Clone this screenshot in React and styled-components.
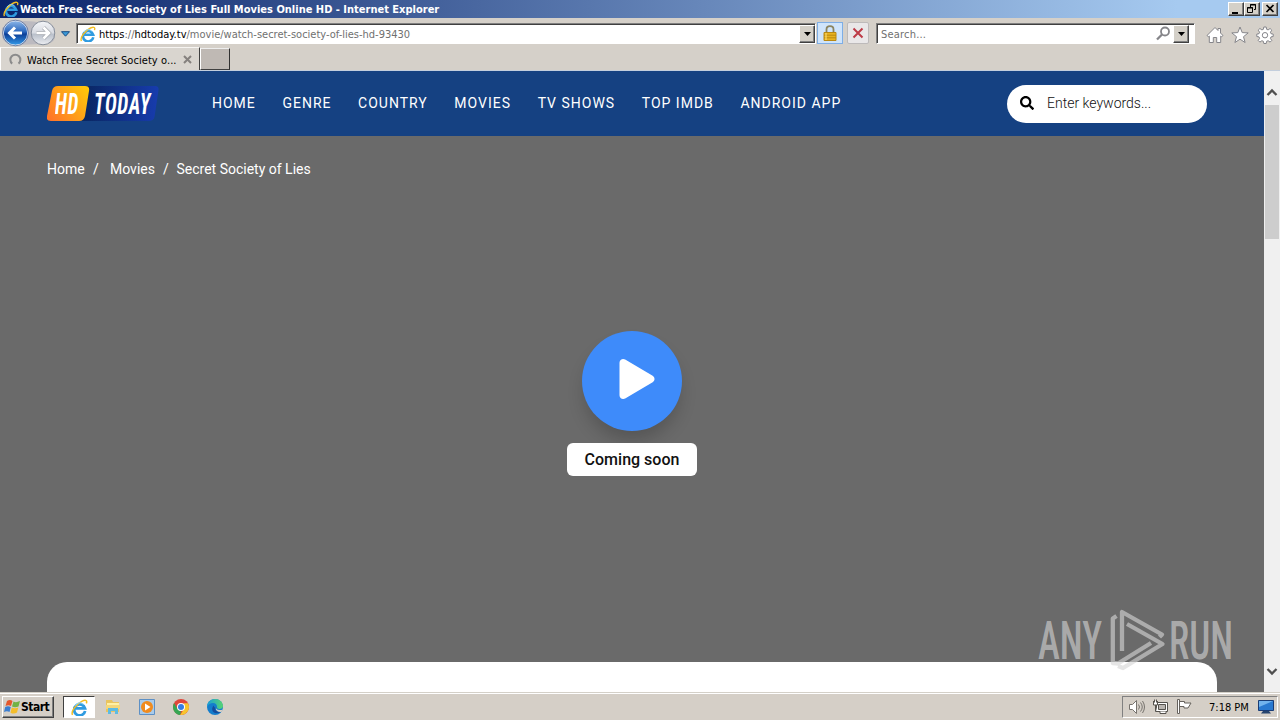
import React from 'react';
import styled, { createGlobalStyle } from 'styled-components';
import { FaSearch, FaPlay } from 'react-icons/fa';

const Global = createGlobalStyle`
  * { box-sizing: border-box; }
  body { margin: 0; overflow: hidden; background: #d4d0c8; }
`;
const Screen = styled.div`
  width: 1280px; height: 720px; display: flex; flex-direction: column; overflow: hidden;
  font: 11px 'DejaVu Sans Condensed', 'DejaVu Sans', sans-serif; font-stretch: condensed; color: #000;
`;
const Label = styled.span`
  display: block; white-space: pre; letter-spacing: ${p => p.$ls || 0}px;
`;
const TitleBar = styled.div`
  height: 18px; flex: none; display: flex; align-items: center; padding: 0 2px 0 3px;
  background: linear-gradient(90deg, #0a246a 0%, #a6caf0 92%); color: #fff; font-weight: bold;
`;
const TitleText = styled(Label)`flex: 1; margin-left: 1px;`;
const WinButton = styled.div`
  width: 16px; height: 14px; margin-left: ${p => p.$gap || 0}px; background: #d4d0c8;
  border: 1px solid; border-color: #fff #404040 #404040 #fff; box-shadow: inset -1px -1px #808080;
  svg { display: block; }
`;
const AddressBar = styled.div`
  height: 29px; flex: none; display: flex; align-items: flex-start; padding-top: 5px; background: #d5d0c9;
`;
const NavButtons = styled.div`width: 76px; height: 29px; margin-top: -5px; svg { display: block; }`;
const Field = styled.div`
  height: 21px; width: ${p => p.$w}px; display: flex; align-items: center; background: #fff;
  border: 1px solid; border-color: #808080 #fff #fff #808080; box-shadow: inset 1px 1px #404040;
  padding-left: ${p => p.$pad}px; margin-right: ${p => p.$mr || 0}px; color: #707070;
  b { color: #000; font-weight: normal; }
`;
const FieldText = styled(Label)`flex: 1; margin: 1px 0 0 ${p => p.$ml || 0}px;`;
const DropButton = styled.div`
  width: 16px; height: 18px; background: #d4d0c8; margin: 0 ${p => p.$mr || 0}px 0 2px;
  border: 1px solid; border-color: #fff #404040 #404040 #fff; box-shadow: inset -1px -1px #808080;
  display: flex; align-items: center; justify-content: center;
`;
const ToolButton = styled.div`
  width: ${p => p.$w}px; height: 22px; margin: -1px ${p => p.$mr}px 0 0; display: flex; align-items: center; justify-content: center;
  background: ${p => p.$active ? '#cfe4fb' : '#e9e7e8'}; border: 1px solid ${p => p.$active ? '#7eaee6' : '#bdbaba'};
  border-radius: ${p => p.$active ? 0 : 2}px;
`;
const Tools = styled.div`display: flex; gap: 7px; margin: 3px 0 0 11px;`;
const TabStrip = styled.div`
  height: 24px; flex: none; display: flex; background: #d5d0c9; border-bottom: 1px solid #c3cedd;
`;
const Tab = styled.div`
  width: 200px; height: 23px; display: flex; align-items: center; padding: 1px 7px 0 8px;
  border-top: 1px solid #f7f5f2; border-left: 1px solid #fff; border-right: 1px solid #404040; background: #d9d5cf;
`;
const TabText = styled(Label)`flex: 1; margin: 1px 0 0 5px;`;
const NewTab = styled.div`
  width: 30px; height: 22px; margin-top: 1px; background: #bfb9b4;
  border: 1px solid; border-color: #eee #303030 #404040 #fff;
`;
const Viewport = styled.div`
  height: 621px; flex: none; display: flex; font-family: Roboto, sans-serif; font-stretch: normal;
`;
const Page = styled.main`
  width: 1264px; height: 621px; background: #6a6a6a; display: flex; flex-direction: column; overflow: hidden; position: relative;
`;
const SiteHeader = styled.header`
  height: 65px; flex: none; background: #154182; display: flex; align-items: center; padding: 0 57px 0 47px;
`;
const LogoBox = styled.div`
  width: 112px; height: 36px; display: flex; position: relative; color: #fff;
`;
const LogoArt = styled.svg`position: absolute; inset: 0;`;
const LogoWord = styled.span`
  position: absolute; left: ${p => p.$x}px; top: 0; font: italic 700 29px/36px Roboto, sans-serif; font-stretch: condensed;
  transform: scaleX(${p => p.$s}); transform-origin: left; white-space: pre; letter-spacing: 1px;
`;
const Menu = styled.nav`
  flex: 1; display: flex; gap: 26.6px; margin: -2px 0 0 53px; font-size: 14px; line-height: 20px; letter-spacing: 1px; color: #fff;
`;
const SearchBox = styled.div`
  width: 200px; height: 38px; border-radius: 19px; background: #fff; display: flex; align-items: center;
  padding: 0 0 2px 13px; gap: 13px; font-size: 14px; font-weight: 300; color: #111;
`;
const Crumbs = styled.div`
  display: flex; padding: 23px 0 0 47px; height: 43px; font-size: 14px; line-height: 20px; color: #fff; white-space: pre;
`;
const Crumb = styled.span`width: ${p => p.$w}px;`;
const Player = styled.section`
  display: flex; flex-direction: column; align-items: center; padding-top: 152px; height: 483px; flex: none;
`;
const PlayButton = styled.div`
  width: 100px; height: 100px; border-radius: 50%; background: #3e8bfa; color: #fff;
  display: flex; align-items: center; justify-content: center; padding: 0 0 4px 10px;
  box-shadow: 0 12px 18px -3px rgba(0,0,0,.2);
`;
const Soon = styled.div`
  width: 130px; height: 33px; margin-top: 12px; border-radius: 6px; background: #fff; color: #111;
  font-size: 16px; font-weight: 500; line-height: 33px; text-align: center;
`;
const Panel = styled.section`
  height: 60px; margin: 0 47px; flex: none; background: #fff; border-radius: 20px 20px 0 0;
`;
const Watermark = styled.div`
  position: absolute; left: 1038px; top: 537px; width: 196px; height: 66px; color: rgba(213,213,213,.62);
  display: flex; align-items: center;
  svg { flex: none; }
`;
const MarkWord = styled.div`
  width: ${p => p.$w}px; font-size: 53px; line-height: 66px; font-weight: 500; font-stretch: condensed; white-space: pre;
  span { display: inline-block; transform: scaleX(${p => p.$s}); transform-origin: left; }
`;
const Scrollbar = styled.div`
  width: 16px; height: 621px; background: #f0f0f0; display: flex; flex-direction: column;
  padding-top: 17px; align-items: center;
  svg { flex: none; }
`;
const Thumb = styled.div`width: 14px; height: 134px; flex: none; background: #cdcdcd; margin: 9px 0 429px;`;
const Taskbar = styled.footer`
  height: 28px; flex: none; background: #d5cfc7; border-top: 1px solid #d4d0c8; box-shadow: inset 0 1px #fff;
  display: flex; align-items: center; padding: 1px 2px 0 2px;
`;
const StartButton = styled.div`
  width: 52px; height: 22px; display: flex; align-items: center; gap: 0; padding-left: 1px; font-weight: bold; font-size: 12px;
  border: 1px solid; border-color: #fff #404040 #404040 #fff; box-shadow: inset -1px -1px #808080;
`;
const ActiveTask = styled.div`
  width: 32px; height: 22px; margin-left: 9px; background: #fff; display: flex; align-items: center; justify-content: center;
  border: 1px solid; border-color: #404040 #fff #fff #404040;
`;
const Quick = styled.div`display: flex; gap: 18px; margin-left: 10px; flex: 1;`;
const Tray = styled.div`
  width: 156px; height: 22px; display: flex; align-items: center; gap: 6px; padding-left: 5px;
  border: 1px solid; border-color: #808080 #fff #fff #808080;
`;
const Clock = styled(Label)`width: 43px; margin-left: 11px;`;

const Arrow = () => <svg width="7" height="4"><path d="M0 0h7L3.5 4z" /></svg>;

const IE = ({ s = 16 }) => (
  <svg width={s} height={s} viewBox="0 0 16 16" fill="none">
    <path d="M13.300 11.300A5.200 5.200 0 1 1 13.200 8.800H4" stroke="#2f9be0" strokeWidth="2.600" />
    <path d="M1.500 15C-.5 12 5 4.600 10.500 2c3.600-1.600 5-.4 3.900 2.100" stroke="#f2bd22" strokeWidth="1.400" />
    <path d="M4.100 6.100c1.700-3 5.500-3.300 7.600-1" stroke="#8bd5fb" strokeWidth="1" />
  </svg>
);

const BackForward = () => (
  <svg width="76" height="29" viewBox="0 0 76 29">
    <defs>
      <linearGradient id="bk" x2="0" y2="1"><stop stopColor="#8db7e8" /><stop offset=".45" stopColor="#2966bd" /><stop offset=".55" stopColor="#0c3f98" /><stop offset="1" stopColor="#359be9" /></linearGradient>
      <linearGradient id="fw" x2="0" y2="1"><stop stopColor="#f4f5f8" /><stop offset=".5" stopColor="#d7dae1" /><stop offset=".55" stopColor="#b9bfca" /><stop offset="1" stopColor="#eceef2" /></linearGradient>
    </defs>
    <path d="M2 10q13-11 41-5q10 0 12 6v9q-3 7-12 6l-28 1Q3 25 2 19z" fill="#bcbac0" />
    <circle cx="15.500" cy="15" r="12.200" fill="url(#bk)" stroke="#e9eef8" />
    <circle cx="15.500" cy="15" r="12.800" fill="none" stroke="#405c91" strokeWidth=".7" />
    <circle cx="43" cy="15" r="11.800" fill="url(#fw)" stroke="#888f9b" />
    <path d="M22 15H10M15 9.500 9.500 15l5.500 5.500" stroke="#fff" strokeWidth="3" fill="none" />
    <path d="M36.500 15H49M43.500 9.500 49 15l-5.500 5.500" stroke="#a4a8af" strokeWidth="4" fill="none" />
    <path d="M36.500 15H49M43.500 9.500 49 15l-5.500 5.500" stroke="#fff" strokeWidth="2.600" fill="none" />
    <path d="M61.500 13.700h8l-4 4.500z" fill="#3b9ad8" stroke="#174b83" />
  </svg>
);

const Logo = () => (
  <LogoBox>
    <LogoArt width="112" height="36" viewBox="0 0 112 36">
      <defs>
        <linearGradient id="or" x1="0" y1=".8" x2="1" y2=".2"><stop stopColor="#ff7629" /><stop offset="1" stopColor="#ffc60a" /></linearGradient>
        <linearGradient id="bl"><stop offset=".25" stopColor="#092660" /><stop offset="1" stopColor="#173cae" /></linearGradient>
      </defs>
      <path d="M10 0h98q4 0 3.500 4l-4 27q-1 4-6 4H30z" fill="url(#bl)" />
      <path d="M11 0h27q5 0 4 5l-4 25q-1 5-6 5H4q-5 0-4-5L5 5q1-5 6-5z" fill="url(#or)" />
    </LogoArt>
    <LogoWord $x={8} $s={0.68}>HD</LogoWord>
    <LogoWord $x={46.500} $s={0.69}>TODAY</LogoWord>
  </LogoBox>
);

const Chevron = ({ down }) => (
  <svg width="12" height="8" viewBox="0 0 12 8"><path d={down ? 'M1.500 1 6 5.500 10.500 1' : 'M1.500 7 6 2.500 10.500 7'} fill="none" stroke="#505050" strokeWidth="2.300" /></svg>
);

const menu = ['HOME', 'GENRE', 'COUNTRY', 'MOVIES', 'TV SHOWS', 'TOP IMDB', 'ANDROID APP'];

export default function App() {
  return (
    <Screen>
      <Global />
      <TitleBar>
        <IE />
        <TitleText>Watch Free Secret Society of Lies Full Movies Online HD - Internet Explorer</TitleText>
        <WinButton><svg width="14" height="12"><path d="M3 9h6v2H3z" /></svg></WinButton>
        <WinButton><svg width="14" height="12" fill="none" stroke="#000"><path d="M5.500 4V1.500h5v5H9M5 2h6M2.500 4.500h5v5h-5zM2 5h6" /></svg></WinButton>
        <WinButton $gap={2}><svg width="14" height="12"><path d="m3.500 2 7 7m0-7-7 7" stroke="#000" strokeWidth="1.700" /></svg></WinButton>
      </TitleBar>
      <AddressBar>
        <NavButtons><BackForward /></NavButtons>
        <Field $w={740} $pad={3} $mr={1}>
          <IE />
          <FieldText $ml={3}><b>https</b>://<b>hdtoday.tv</b>/movie/watch-secret-society-of-lies-hd-93430</FieldText>
          <DropButton><Arrow /></DropButton>
        </Field>
        <ToolButton $w={26} $mr={4} $active>
          <svg width="14" height="17" viewBox="0 0 14 17"><path d="M3.500 8V4.500Q3.500 1.200 7 1.200t3.500 3.300V8" fill="none" stroke="#8b8460" strokeWidth="1.800" /><path d="M1 7.500h12v8H1z" fill="#e8b321" stroke="#b98813" /><path d="M1 10.200h12M1 12.800h12" stroke="#bb8a10" /><path d="M3 8v7" stroke="#ffe27c" /></svg>
        </ToolButton>
        <ToolButton $w={22} $mr={7}>
          <svg width="12" height="12"><path d="m1.500 1.500 9 9m0-9-9 9" stroke="#bd3b47" strokeWidth="2" /></svg>
        </ToolButton>
        <Field $w={319} $pad={4}>
          <FieldText $ls={0.2}>Search...</FieldText>
          <svg width="15" height="15" fill="none" stroke="#858589"><circle cx="9" cy="5.500" r="4" strokeWidth="1.800" /><path d="m6 8.500-5 5" strokeWidth="2.300" /></svg>
          <DropButton $mr={5}><Arrow /></DropButton>
        </Field>
        <Tools>
          <svg width="18" height="18" viewBox="0 0 18 18" fill="#fff" stroke="#85858a"><path d="M1 9.500 9 1.500l3 3V2.500h2.500V7L17 9.500l-1.500 1.200-.8-.6V16.500h-4v-5H7.300v5h-4v-6.400l-.8.600z" /></svg>
          <svg width="18" height="18" viewBox="0 0 18 18" fill="#fff" stroke="#85858a"><path d="m9 1 2.200 5.600 6 .3-4.700 3.800 1.600 5.800L9 13.200l-5.100 3.300 1.600-5.800L.8 6.900l6-.3z" /></svg>
          <svg width="18" height="18" viewBox="0 0 18 18" fill="#fff" stroke="#85858a"><path d="m7.800 1h2.400l.4 2.300 1.500.6 2-1.400 1.700 1.700-1.400 2 .6 1.500 2.200.4v2.400l-2.200.4-.6 1.500 1.400 2-1.700 1.700-2-1.400-1.500.6-.4 2.200H7.800l-.4-2.200-1.500-.6-2 1.400-1.700-1.700 1.400-2L3 10.900l-2.200-.4V8.100L3 7.700l.6-1.500-1.400-2 1.700-1.700 2 1.400 1.500-.6z" /><circle cx="9" cy="9.200" r="2.700" /></svg>
        </Tools>
      </AddressBar>
      <TabStrip>
        <Tab>
          <svg width="13" height="13" viewBox="0 0 13 13"><path d="M3.200 10.600A5 5 0 1 1 9.500 10.600" fill="none" stroke="#8b8b8b" strokeWidth="2" /></svg>
          <TabText $ls={0.07}>Watch Free Secret Society o...</TabText>
          <svg width="9" height="9"><path d="m1 1 7 7m0-7-7 7" stroke="#85817e" strokeWidth="2" /></svg>
        </Tab>
        <NewTab />
      </TabStrip>
      <Viewport>
        <Page>
          <SiteHeader>
            <Logo />
            <Menu>{menu.map(m => <span key={m}>{m}</span>)}</Menu>
            <SearchBox><FaSearch size={14} color="#000" /><span>Enter keywords...</span></SearchBox>
          </SiteHeader>
          <Crumbs><Crumb $w={46}>Home</Crumb><Crumb $w={17}>/</Crumb><Crumb $w={53}>Movies</Crumb><Crumb $w={13.500}>/</Crumb><Crumb>Secret Society of Lies</Crumb></Crumbs>
          <Player>
            <PlayButton><FaPlay size={40} /></PlayButton>
            <Soon>Coming soon</Soon>
          </Player>
          <Panel />
          <Watermark>
            <MarkWord $w={72} $s={0.7}><span>ANY</span></MarkWord>
            <svg width="59" height="66" viewBox="0 0 59 66" fill="none" stroke="currentColor" strokeWidth="4.300" strokeLinejoin="round">
              <path d="M49.500 29 52 26.500 12 4v39M17 16l35.500 20L13 60l-5-2M6.500 8 2.800 10.500V55l5.200.5L41 35" />
            </svg>
            <MarkWord $w={64} $s={0.7}><span>RUN</span></MarkWord>
          </Watermark>
        </Page>
        <Scrollbar><Chevron /><Thumb /><Chevron down /></Scrollbar>
      </Viewport>
      <Taskbar>
        <StartButton>
          <svg width="17" height="16" viewBox="0 0 17 16"><path d="M3 2q3-2 5.500 0L7 7Q4.500 5.500 1.500 7z" fill="#e5572b" /><path d="M9.500 2.500Q12 4 16 2l-1.500 5.500Q11 9 8 7.500z" fill="#71b244" /><path d="M1.200 8Q4 6.500 6.800 8L5.500 13Q3 11.500 0 13z" fill="#3c7ed0" /><path d="M7.800 8.500q3 1.500 6.500 0L13 13.500q-3 2-6.500.2z" fill="#f4bd2b" /></svg>
          <Label $ls={-0.5}>Start</Label>
        </StartButton>
        <ActiveTask><IE s={17} /></ActiveTask>
        <Quick>
          <svg width="16" height="16"><path d="M1 3V1h6l1 2h6v10H1z" fill="#e9c45f" /><path d="M2 4h12v4H2z" fill="#fff0a4" /><path d="M1 6h14v4H1z" fill="#f4d77a" /><path d="M3 15V9h10v6h-3v-3H6v3z" fill="#5dbbe3" /></svg>
          <svg width="16" height="16"><path d="M.5.500h15v15H.500z" fill="#a9cbea" stroke="#5d90c5" /><circle cx="8" cy="8" r="6" fill="#f08b1e" /><path d="m6 4.500 5.500 3.500L6 11.500z" fill="#fff" /></svg>
          <svg width="16" height="16" viewBox="0 0 16 16"><circle cx="8" cy="8" r="8" fill="#e0463b" /><path d="M1.100 4 5 10.800 8 12 7.200 16A8 8 0 0 1 1.100 4" fill="#36a653" /><path d="M15 4.300A8 8 0 0 1 7.200 16L11.300 9.500 10.500 4.300z" fill="#f7c52d" /><circle cx="8" cy="8" r="4" fill="#fff" /><circle cx="8" cy="8" r="3" fill="#367de4" /></svg>
          <svg width="17" height="16" viewBox="0 0 17 16"><defs><linearGradient id="ed"><stop stopColor="#189ed8" /><stop offset="1" stopColor="#59d570" /></linearGradient></defs><circle cx="8" cy="8" r="8" fill="#147dcc" /><path d="M0 8C0-2 15-3 16 7c0 3-4 4-6 2C11 2 2 3 0 8" fill="url(#ed)" /><path d="M6.500 6.500C2 13 10 16.500 14 12.500c-3 1-7-1-5.500-3.500Q7 8 6.500 6.500" fill="#164c9c" /><path d="M8.800 9.200q2.500 3 7 1.200l-1.500 2.500q-5 .5-5.500-3.700" fill="#d5cfc7" /></svg>
        </Quick>
        <Tray>
          <svg width="18" height="16" fill="#fff" stroke="#77736e"><path d="M1.500 5.500h3L8.500 1.500v13l-4-4h-3z" /><path d="M10.500 5.500q2 2.500 0 5M12.500 3.500q3.500 4.500 0 9M14.500 2q4 6 0 12" fill="none" /></svg>
          <svg width="18" height="16" fill="#fff" stroke="#55524d"><path d="M4.500 3.500h11v9h-11z" /><path d="M6.500 5.500h7v5h-7z" fill="#b9b5b0" /><path d="M8 12.500v2h6v-2M1.500 2v4h4V2M2.500.500v3M4.500.500v3M3.500 6v6.500H5" /></svg>
          <svg width="16" height="16" fill="#fff" stroke="#66625d"><path d="M1.500.500h2v14h-2zM3.500 2.500h5v1.500h6.500l-3 5H8V7.500H3.500z" /></svg>
          <Clock>7:18 PM</Clock>
          <svg width="16" height="14"><path d="M.5.500h15v10h-15z" fill="#2979d0" stroke="#193c75" /><path d="M1 1h14L1 7z" fill="#71b3ed" /><path d="M3 13.500 5 11h6l2 2.500z" fill="#26446e" /></svg>
        </Tray>
      </Taskbar>
    </Screen>
  );
}
